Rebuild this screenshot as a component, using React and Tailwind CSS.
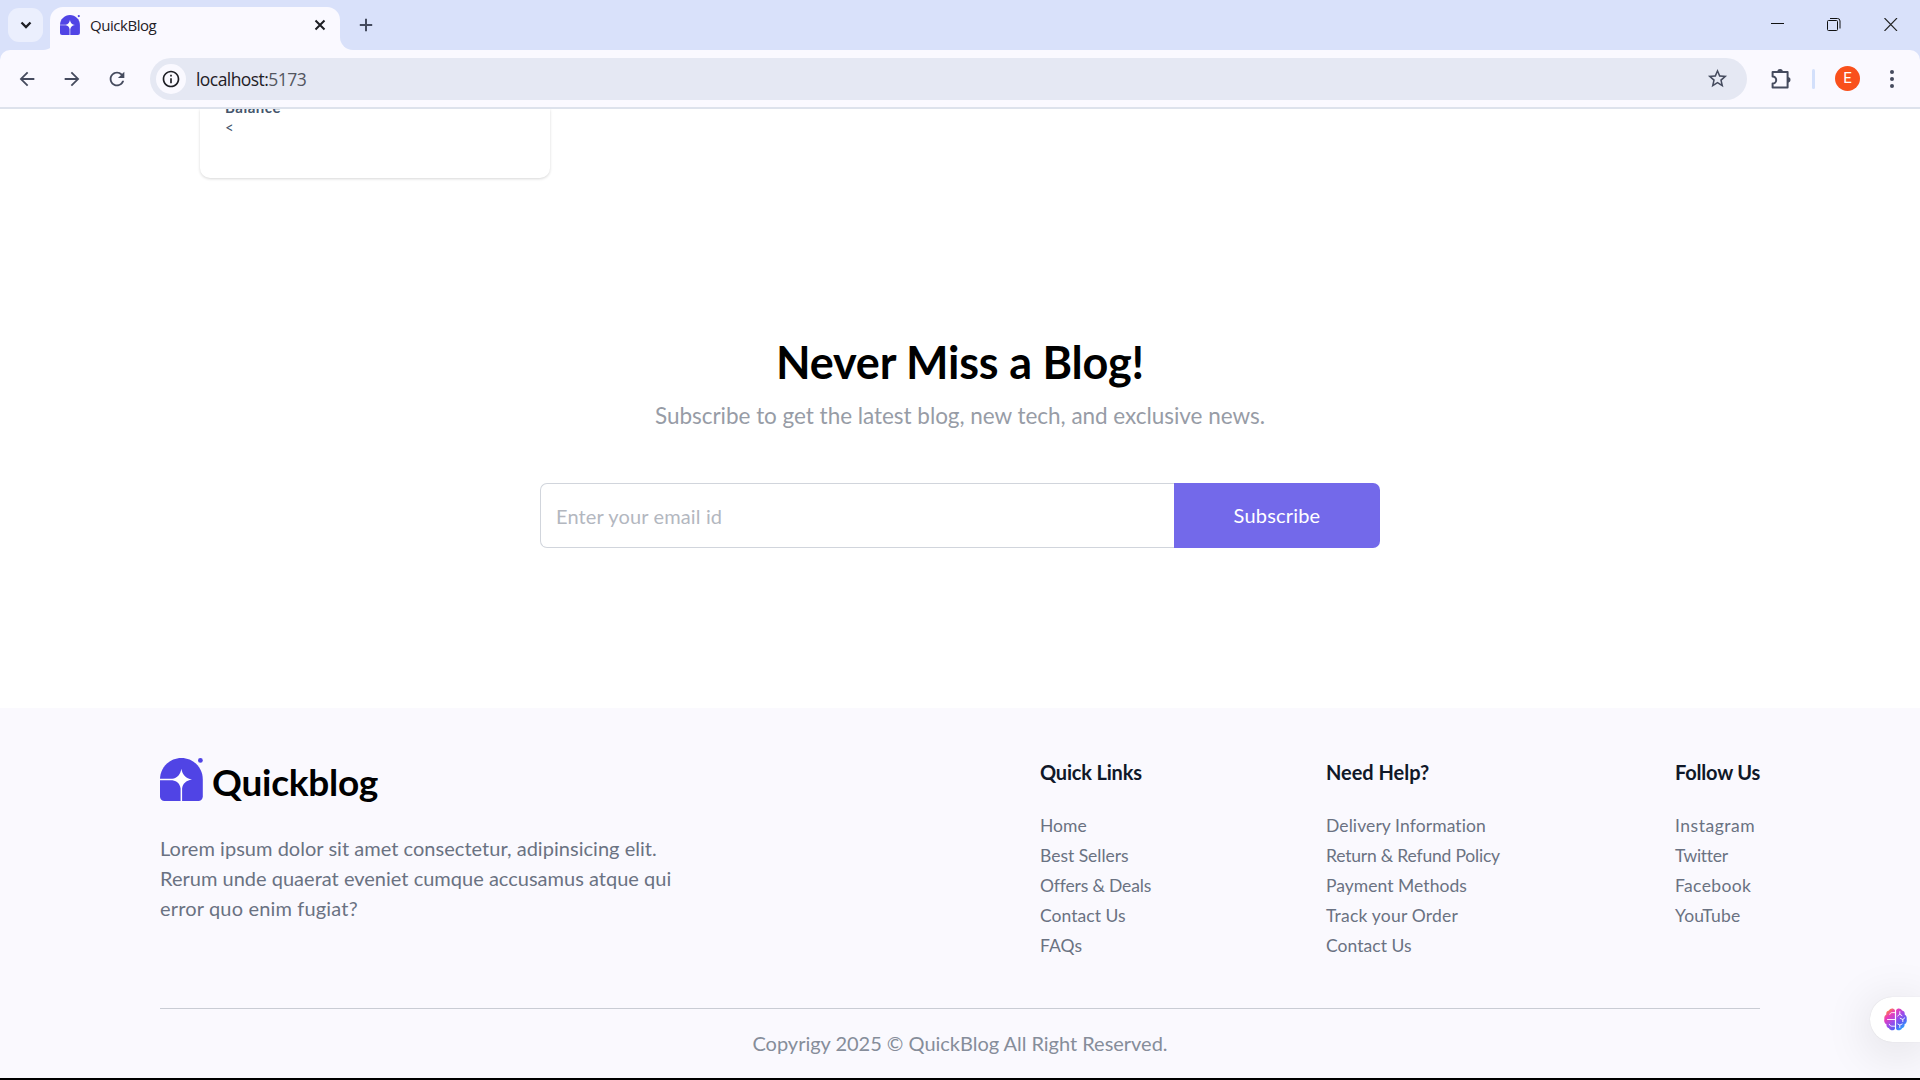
import React from "react";
import {
  MdArrowBack,
  MdArrowForward,
  MdRefresh,
  MdStarBorder,
  MdInfoOutline,
} from "react-icons/md";

const footerColumns = [
  {
    title: "Quick Links",
    titleClass: "tracking-[-0.18px]",
    width: "w-[111px]",
    links: [
      { label: "Home", cls: "tracking-[0.03px]" },
      { label: "Best Sellers", cls: "tracking-[-0.02px]" },
      { label: "Offers & Deals", cls: "tracking-[-0.16px]" },
      { label: "Contact Us", cls: "tracking-[0.05px]" },
      { label: "FAQs", cls: "tracking-[0.1px]" },
    ],
  },
  {
    title: "Need Help?",
    titleClass: "tracking-[-0.03px]",
    width: "w-[174px]",
    links: [
      { label: "Delivery Information", cls: "tracking-[0.1px]" },
      { label: "Return & Refund Policy", cls: "tracking-[-0.2px]" },
      { label: "Payment Methods", cls: "tracking-[0.04px]" },
      { label: "Track your Order", cls: "tracking-[0.2px]" },
      { label: "Contact Us", cls: "tracking-[0.05px]" },
    ],
  },
  {
    title: "Follow Us",
    titleClass: "tracking-[-0.2px]",
    width: "w-[85px]",
    links: [
      { label: "Instagram", cls: "tracking-[0.53px]" },
      { label: "Twitter", cls: "tracking-[-0.3px]" },
      { label: "Facebook", cls: "tracking-[0.36px]" },
      { label: "YouTube", cls: "tracking-[0.19px]" },
    ],
  },
];

function LogoMark({ className }) {
  return (
    <svg viewBox="0 0 43 43" className={className}>
      <path
        d="M0 21.3C0 9.5 9.6 0 21.4 0S42.8 9.5 42.8 21.3V38.5a4.5 4.5 0 0 1-4.5 4.5H4.5A4.5 4.5 0 0 1 0 38.5Z"
        fill="#5044E5"
      />
      <path
        d="M21.4 10.7c1.1 6.3 4.3 9.6 10.6 10.8-6.3 1.2-9.2 4.2-9.9 9V43h-1.5V30.5c-.7-4.5-3.2-7.4-8.2-8.2H0v-1.5h12.2c5.2-.9 8.1-4.2 9.2-10.1Z"
        fill="#fff"
      />
      <circle cx="40.4" cy="2.4" r="2.4" fill="#5044E5" />
    </svg>
  );
}

function ExtensionIcon() {
  return (
    <svg viewBox="0 0 22 22" className="size-[22px]" fill="none">
      <path
        d="M2.6 4H17.6V19.5H2.6V15.6a3.6 3.6 0 0 0 0-7.2Z"
        stroke="#454b5e"
        strokeWidth="2"
        strokeLinejoin="round"
      />
      <path d="M7.3 4a2.8 3 0 0 1 5.6 0ZM17.6 9a2.9 2.8 0 0 1 0 5.6Z" fill="#454b5e" />
    </svg>
  );
}

function BrainIcon() {
  return (
    <svg viewBox="0 0 23 23" className="size-[23px]" fill="none">
      <defs>
        <linearGradient id="brain" x1="3" y1="1" x2="20" y2="21" gradientUnits="userSpaceOnUse">
          <stop offset="0" stopColor="#fb9a2b" />
          <stop offset="0.24" stopColor="#ee3cb4" />
          <stop offset="0.5" stopColor="#a44be8" />
          <stop offset="0.75" stopColor="#5b5cf3" />
          <stop offset="1" stopColor="#22b6ff" />
        </linearGradient>
      </defs>
      <path
        d="M10.9 2v19c-1 1.900-4.800 1.800-5.900-.8-2-.4-2.900-2.300-2.500-4C.5 15.300-.2 13 .4 11c-.4-2 .3-3.700 1.900-4.600C2 4.300 3 2.900 4.900 2.500 6-.1 9.800-.2 10.900 2Z"
        fill="url(#brain)"
      />
      <path
        d="M12.100 2v19c1 1.900 4.800 1.800 5.900-.8 2-.4 2.900-2.300 2.500-4 2-.9 2.700-3.200 2.100-5.200.4-2-.3-3.700-1.900-4.600.3-2.100-.7-3.500-2.600-3.900C17-.1 13.200-.2 12.100 2Z"
        fill="url(#brain)"
      />
      <path
        d="M11 11.500H3.500M10.800 4.600H8.200c-1.200 0-2 .6-2.400 1.700M5.300 16.300c.5 1.300 1.400 1.900 2.700 1.900h2.800M15.800 3.600v2.600M13.700 8l2.100-1.800L18 7.700M20.800 9.800l-2 1.700v2.200M18.800 11.500l-2.600-1.200M13.800 16l2 1.100 2.300-1.100M15.800 17.100v2.400"
        stroke="#fff"
        strokeWidth="0.9"
        strokeLinecap="round"
      />
    </svg>
  );
}

function TabStrip() {
  return (
    <div className="flex h-[50px] bg-[#d9e1fa]">
      <button className="mt-2 ml-2 flex h-[34px] w-[35px] items-center justify-center rounded-[11px] bg-[#ebeffd]">
        <svg viewBox="0 0 12 8" className="h-2 w-3" fill="none">
          <path d="M1.500 1.500 6 6l4.500-4.500" stroke="#1d1e24" strokeWidth="2.300" />
        </svg>
      </button>
      <div className="mr-[-6px] size-[13px] self-end bg-[#faf9ff]">
        <div className="size-full rounded-br-[13px] bg-[#d9e1fa]" />
      </div>
      <div className="flex h-[43px] w-[290px] items-center self-end rounded-t-[13px] bg-[#faf9ff] pr-3.5 pb-[7px] pl-2.5">
        <LogoMark className="size-5" />
        <span className="ml-2.5 font-['Open_Sans',sans-serif] text-[15px] tracking-[-0.46px] text-[#1f2026]">
          QuickBlog
        </span>
        <svg viewBox="0 0 12 12" className="ml-auto size-3" fill="none">
          <path d="m1.500 1.500 9 9m0-9-9 9" stroke="#1d1e24" strokeWidth="2" />
        </svg>
      </div>
      <div className="size-[13px] self-end bg-[#faf9ff]">
        <div className="size-full rounded-bl-[13px] bg-[#d9e1fa]" />
      </div>
      <svg viewBox="0 0 14 14" className="mt-[18px] ml-1.5 size-3.5" fill="none">
        <path d="M7 .8v12.400M.8 7h12.400" stroke="#454b5e" strokeWidth="2" />
      </svg>
      <div className="mt-[18px] mr-[22px] ml-auto flex h-[13px] gap-[43px]">
        <svg viewBox="0 0 14 13" className="h-[13px] w-3.5" fill="none">
          <path d="M1 5.500h13" stroke="#111" />
        </svg>
        <svg viewBox="0 0 14 13" className="h-[13px] w-3.5" fill="none">
          <rect x="0.500" y="2.500" width="10" height="10" rx="1" stroke="#111" />
          <path d="M3 .5h7.500a2.500 2.500 0 0 1 2.500 2.500v7.500" stroke="#111" />
        </svg>
        <svg viewBox="0 0 14 13" className="h-[13px] w-3.5" fill="none">
          <path d="m.5 0 12.500 13M13 0 .5 13" stroke="#222" strokeWidth="1.100" />
        </svg>
      </div>
    </div>
  );
}

function Toolbar() {
  return (
    <div className="bg-[#d9e1fa]">
      <div className="flex h-[59px] items-center rounded-t-[10px] border-b-2 border-[#dde2ec] bg-[#faf9ff] pl-4 text-[#454b5e]">
        <MdArrowBack className="size-[22px]" />
        <MdArrowForward className="ml-[23px] size-[22px]" />
        <MdRefresh className="ml-[23px] size-[22px]" />
        <div className="ml-[22px] flex h-[42px] w-[1597px] items-center rounded-full bg-[#e5e8f3] pr-[18px] pl-1.5">
          <div className="flex size-[30px] items-center justify-center rounded-full bg-[#faf9ff]">
            <MdInfoOutline className="size-5 text-[#1d1e24]" />
          </div>
          <p className="ml-2.5 pt-0.5 font-['Open_Sans',sans-serif] text-[17.5px] leading-none tracking-[-0.56px] text-[#1f2026]">
            localhost:<span className="text-[#53565f]">5173</span>
          </p>
          <MdStarBorder className="ml-auto size-[23px]" />
        </div>
        <div className="ml-[23px]">
          <ExtensionIcon />
        </div>
        <div className="ml-5 h-5 w-[3px] rounded-full bg-[#d3e0fb]" />
        <div className="ml-5 flex size-[25px] items-center justify-center rounded-full bg-[#f9501c] font-[Roboto,sans-serif] text-[15px] leading-none text-white">
          E
        </div>
        <div className="ml-[30px] flex flex-col gap-[3px]">
          <div className="size-1 rounded-full bg-[#454b5e]" />
          <div className="size-1 rounded-full bg-[#454b5e]" />
          <div className="size-1 rounded-full bg-[#454b5e]" />
        </div>
      </div>
    </div>
  );
}

function BlogCardTail() {
  return (
    <div className="ml-[200px] flex h-[69px] w-[350px] flex-col rounded-b-[10px] px-[25px] text-[15px] leading-5 text-[#45556c] shadow-[0_1px_3px_rgba(0,0,0,0.16)] [clip-path:inset(0_-8px_-8px_-8px)]">
      <p className="-mt-3 font-bold tracking-[0.54px]">Balance</p>
      <p>&lt;</p>
    </div>
  );
}

function Newsletter() {
  return (
    <section className="flex flex-col items-center pt-[159px]">
      <h1 className="text-[45px] leading-[50px] font-bold tracking-[-0.2px] text-black">
        Never Miss a Blog!
      </h1>
      <p className="mt-[11px] text-[22.5px] leading-[35px] tracking-[-0.03px] text-[#979ca6]">
        Subscribe to get the latest blog, new tech, and exclusive news.
      </p>
      <form className="mt-[50px] flex h-[65px] w-[840px]">
        <input
          type="text"
          placeholder="Enter your email id"
          className="w-[634px] rounded-l-[7px] border border-r-0 border-[#d1d5dc] px-[15px] text-xl tracking-[0.14px] outline-none placeholder:text-[#b3b7bf]"
        />
        <button
          type="button"
          className="w-[206px] rounded-r-[7px] bg-[#7369ea] pb-0.5 text-xl tracking-[0.19px] text-white"
        >
          Subscribe
        </button>
      </form>
    </section>
  );
}

function Footer() {
  return (
    <footer className="mt-40 h-[370px] bg-[#faf9fe] px-40 pt-[49px]">
      <div className="flex h-[252px] justify-between border-b border-[#c9ccd4] text-[#6a7282]">
        <div className="w-[520px] pt-px">
          <div className="flex">
            <LogoMark className="size-[43px]" />
            <span className="ml-[9px] pt-[2px] text-[37px] leading-[44px] font-bold tracking-[-0.25px] text-black">
              Quickblog
            </span>
          </div>
          <p className="mt-[29px] text-xl leading-[30px]">
            <span className="tracking-[0.03px]">
              Lorem ipsum dolor sit amet consectetur, adipinsicing elit.
            </span>
            <br />
            <span className="tracking-[0.01px]">
              Rerum unde quaerat eveniet cumque accusamus atque qui
            </span>
            <br />
            <span className="tracking-[0.16px]">error quo enim fugiat?</span>
          </p>
        </div>
        <div className="flex w-[720px] justify-between">
          {footerColumns.map((col) => (
            <div key={col.title} className={col.width}>
              <h3 className="text-xl leading-[30px] font-bold whitespace-nowrap text-[#101828]">
                <span className={col.titleClass}>{col.title}</span>
              </h3>
              <ul className="mt-6 text-[17.5px] leading-[30px] whitespace-nowrap">
                {col.links.map((link) => (
                  <li key={link.label} className={link.cls}>
                    {link.label}
                  </li>
                ))}
              </ul>
            </div>
          ))}
        </div>
      </div>
      <p className="pt-[19px] text-center text-xl leading-[30px] tracking-[-0.02px] text-[#868d9a]">
        Copyrigy 2025 © QuickBlog All Right Reserved.
      </p>
    </footer>
  );
}

export default function App() {
  return (
    <div className="relative flex h-[1080px] w-[1920px] flex-col overflow-hidden bg-white font-[Lato,sans-serif]">
      <TabStrip />
      <Toolbar />
      <main>
        <BlogCardTail />
        <Newsletter />
        <Footer />
      </main>
      <div className="absolute top-[997px] right-0 flex h-[45px] w-[50px] items-center rounded-l-full bg-white pl-3.5 shadow-[0_0_1px_rgba(0,0,0,0.15),0_8px_50px_rgba(0,0,0,0.14)]">
        <BrainIcon />
      </div>
      <div className="relative mt-auto h-0.5 shrink-0 bg-black" />
    </div>
  );
}
